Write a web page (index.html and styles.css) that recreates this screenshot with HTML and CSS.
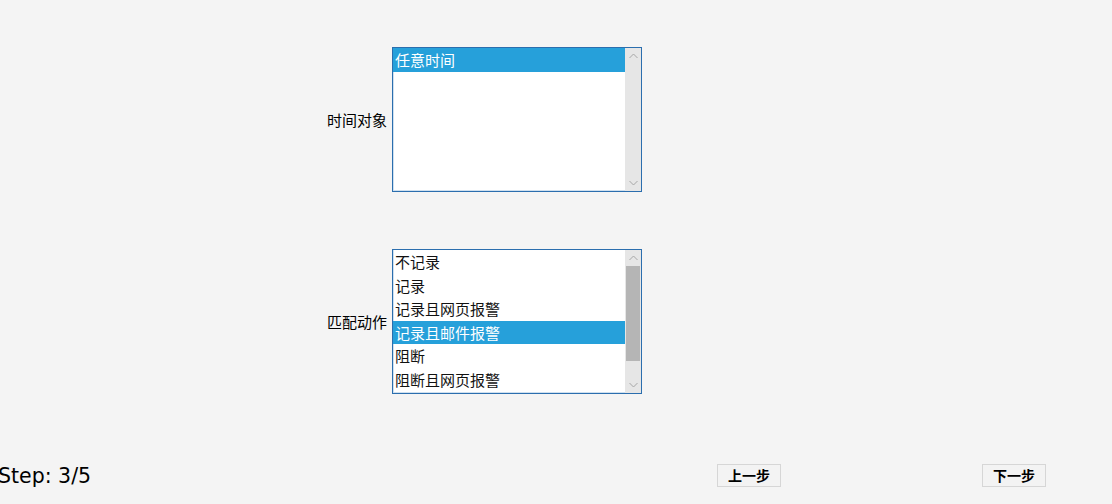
FILE: index.html
```html
<!DOCTYPE html>
<html lang="zh">
<head>
<meta charset="utf-8">
<title>Step 3/5</title>
<link rel="stylesheet" href="styles.css">
</head>
<body>
<div class="form">
  <div class="row">
    <div class="label">时间对象</div>
    <div class="listbox">
      <div class="items">
        <div class="item selected">任意时间</div>
      </div>
      <div class="scrollbar">
        <div class="arrow up"><svg width="9" height="6" viewBox="0 0 9 6"><path d="M0.5 5 L4.5 1 L8.5 5" fill="none" stroke="#a6a6a6" stroke-width="1"/></svg></div>
        <div class="track"></div>
        <div class="arrow down"><svg width="9" height="6" viewBox="0 0 9 6"><path d="M0.5 1 L4.5 5 L8.5 1" fill="none" stroke="#a6a6a6" stroke-width="1"/></svg></div>
      </div>
    </div>
  </div>
  <div class="row">
    <div class="label">匹配动作</div>
    <div class="listbox">
      <div class="items">
        <div class="item">不记录</div>
        <div class="item">记录</div>
        <div class="item">记录且网页报警</div>
        <div class="item selected">记录且邮件报警</div>
        <div class="item">阻断</div>
        <div class="item">阻断且网页报警</div>
      </div>
      <div class="scrollbar">
        <div class="arrow up"><svg width="9" height="6" viewBox="0 0 9 6"><path d="M0.5 5 L4.5 1 L8.5 5" fill="none" stroke="#a6a6a6" stroke-width="1"/></svg></div>
        <div class="track"><div class="thumb"></div></div>
        <div class="arrow down"><svg width="9" height="6" viewBox="0 0 9 6"><path d="M0.5 1 L4.5 5 L8.5 1" fill="none" stroke="#a6a6a6" stroke-width="1"/></svg></div>
      </div>
    </div>
  </div>
</div>
<div class="footer">
  <div class="step">Step: 3/5</div>
  <button class="btn prev">上一步</button>
  <button class="btn next">下一步</button>
</div>
</body>
</html>
```

FILE: styles.css
```css
html, body {
  margin: 0;
  padding: 0;
  background: #f4f4f4;
  width: 1112px;
  height: 504px;
  overflow: hidden;
}

body {
  font-family: "Noto Sans CJK SC", "DejaVu Sans", sans-serif;
  color: #000;
}

.form {
  padding-top: 47px;
  display: flex;
  flex-direction: column;
  gap: 57px;
}

.row {
  display: grid;
  grid-template-columns: 387px 250px;
  column-gap: 5px;
  align-items: center;
}

.label {
  text-align: right;
  font-size: 15px;
  line-height: 20px;
}

.listbox {
  box-sizing: border-box;
  width: 250px;
  height: 145px;
  border: 1px solid #2b6eae;
  background: #fff;
  display: flex;
  overflow: hidden;
  box-shadow: inset 0 -1px 0 #cfe0ef, inset 1px 0 0 #cfe0ef;
}

.items {
  flex: 1;
  overflow: hidden;
}

.item {
  height: 23.6px;
  line-height: 23px;
  font-size: 15px;
  padding-left: 2px;
  white-space: nowrap;
  color: #111;
}

.item.selected {
  background: #26a0da;
  color: #fff;
}

.scrollbar {
  width: 16px;
  background: #e6e6e6;
  display: flex;
  flex-direction: column;
}

.arrow {
  height: 16px;
  display: flex;
  align-items: center;
  justify-content: center;
}

.track {
  flex: 1;
  padding: 0 1px;
}

.thumb {
  height: 95px;
  background: #b5b5b5;
}

.footer {
  margin-top: 69px;
  display: flex;
  align-items: center;
  height: 24px;
}

.step {
  font-family: "DejaVu Sans", sans-serif;
  font-size: 20.5px;
  line-height: 24px;
  margin-left: -2px;
  width: 719px;
  padding-top: 2px;
}

.btn {
  box-sizing: border-box;
  width: 64px;
  height: 23px;
  border: 1px solid #d6d6d6;
  background: #f3f3f3;
  font-family: "Noto Sans CJK SC", sans-serif;
  font-size: 14px;
  font-weight: 700;
  color: #000;
  padding: 0;
  line-height: 20px;
}

.btn.next {
  margin-left: 201px;
}
```
